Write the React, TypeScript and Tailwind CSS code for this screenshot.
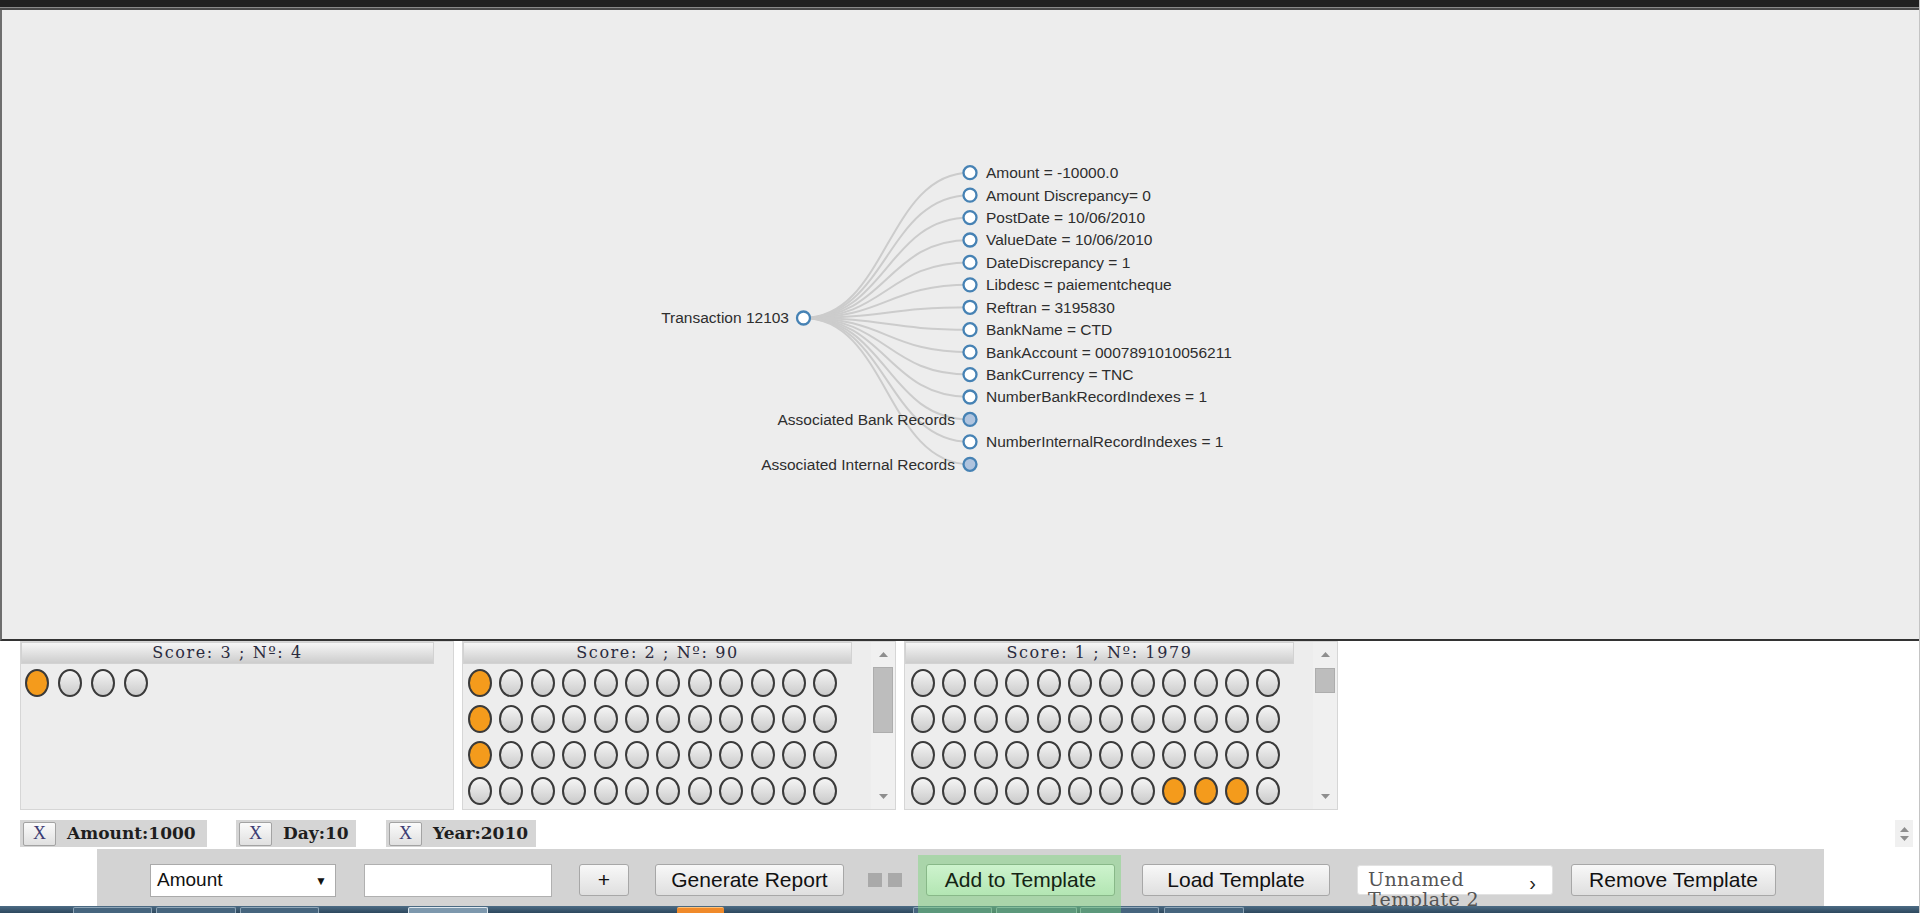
import React from "react";

type Leaf = { t: string; c?: boolean };

const leaves: Leaf[] = [
  { t: "Amount = -10000.0" },
  { t: "Amount Discrepancy= 0" },
  { t: "PostDate = 10/06/2010" },
  { t: "ValueDate = 10/06/2010" },
  { t: "DateDiscrepancy = 1" },
  { t: "Libdesc = paiementcheque" },
  { t: "Reftran = 3195830" },
  { t: "BankName = CTD" },
  { t: "BankAccount = 0007891010056211" },
  { t: "BankCurrency = TNC" },
  { t: "NumberBankRecordIndexes = 1" },
  { t: "Associated Bank Records", c: true },
  { t: "NumberInternalRecordIndexes = 1" },
  { t: "Associated Internal Records", c: true },
];

const ROOT_X = 803.5;
const ROOT_Y = 318;
const LEAF_X = 970;

function Tree() {
  const ys = leaves.map((_, i) => 172.7 + 22.43 * i);
  const mid = (ROOT_X + LEAF_X) / 2;
  return (
    <svg width={1917} height={629} className="block">
      <g transform="translate(-2,-10)" fontFamily="'Liberation Sans', Arial, sans-serif" fontSize={15.5}>
        {ys.map((y, i) => (
          <path
            key={"l" + i}
            d={`M${ROOT_X},${ROOT_Y}C${mid},${ROOT_Y} ${mid},${y} ${LEAF_X},${y}`}
            fill="none"
            stroke="#cccccc"
            strokeWidth={2}
          />
        ))}
        <circle cx={ROOT_X} cy={ROOT_Y} r={6.5} fill="#ffffff" stroke="#4682b4" strokeWidth={2.3} />
        <text x={789} y={ROOT_Y} dy="0.35em" textAnchor="end" fill="#2e2e2e">
          Transaction 12103
        </text>
        {leaves.map((l, i) => (
          <g key={"n" + i}>
            <circle
              cx={LEAF_X}
              cy={ys[i]}
              r={6.5}
              fill={l.c ? "#b0c4de" : "#ffffff"}
              stroke="#4682b4"
              strokeWidth={2.3}
            />
            <text
              x={l.c ? LEAF_X - 15 : LEAF_X + 16}
              y={ys[i]}
              dy="0.35em"
              textAnchor={l.c ? "end" : "start"}
              fill="#2e2e2e"
            >
              {l.t}
            </text>
          </g>
        ))}
      </g>
    </svg>
  );
}

function Dot({ on }: { on: boolean }) {
  return (
    <span
      className={
        on
          ? "block shrink-0 w-[24px] h-[28px] rounded-[50%] border-2 border-[#3a3a3a] bg-[#f49b1c]"
          : "block shrink-0 w-[24px] h-[28px] rounded-[50%] border-2 border-[#3a3a3a] bg-linear-to-b from-[#f5f5f5] to-[#cbcbcb]"
      }
    />
  );
}

function Arrow({ down }: { down?: boolean }) {
  return (
    <svg width="9" height="5">
      <polygon points={down ? "0,0 9,0 4.5,5" : "0,5 4.5,0 9,5"} fill="#8e8e8e" />
    </svg>
  );
}

function Scroll({ top, h }: { top: number; h: number }) {
  return (
    <div className="w-[24px] h-full bg-[#f0f0f0] flex flex-col items-center">
      <div className="h-[25px] flex items-center justify-center">
        <Arrow />
      </div>
      <div
        className="w-[20px] bg-[#bdbdbd] border border-[#adadad]"
        style={{ marginTop: top - 25, height: h }}
      />
      <div className="flex-1" />
      <div className="h-[25px] flex items-center justify-center">
        <Arrow down />
      </div>
    </div>
  );
}

function Header({ title, w }: { title: string; w: string }) {
  return (
    <div
      className={
        w +
        " h-[22px] shrink-0 flex items-center justify-center bg-linear-to-b from-[#f6f6f6] to-[#cdcdcd] border border-[#d2d2d2] text-[16px] tracking-[1.6px] text-[#2b2b3e] font-['DejaVu_Serif',serif]"
      }
    >
      {title}
    </div>
  );
}

function grid(rows: number, cols: number, on: (r: number, c: number) => boolean) {
  return Array.from({ length: rows }, (_, r) => (
    <div key={r} className="flex gap-[7.4px]">
      {Array.from({ length: cols }, (_, c) => (
        <Dot key={c} on={on(r, c)} />
      ))}
    </div>
  ));
}

function ScoreRow() {
  return (
    <div className="flex gap-[8px] pl-[20px] h-[169px]">
      <div className="w-[434px] h-full bg-[#ededed] border border-[#d6d6d6] overflow-hidden">
        <Header title="Score: 3 ; Nº: 4" w="w-[413px]" />
        <div className="flex gap-[9px] pl-[4px] pt-[5px]">
          {[true, false, false, false].map((o, i) => (
            <Dot key={i} on={o} />
          ))}
        </div>
      </div>
      <div className="w-[434px] h-full bg-[#ededed] border border-[#d6d6d6] overflow-hidden flex">
        <div className="flex-1 flex flex-col">
          <Header title="Score: 2 ; Nº: 90" w="w-[389px]" />
          <div className="flex flex-col gap-[8px] pl-[5px] pt-[5px]">
            {grid(4, 12, (r, c) => c === 0 && r < 3)}
          </div>
        </div>
        <Scroll top={25} h={66} />
      </div>
      <div className="w-[434px] h-full bg-[#ededed] border border-[#d6d6d6] overflow-hidden flex">
        <div className="flex-1 flex flex-col">
          <Header title="Score: 1 ; Nº: 1979" w="w-[389px]" />
          <div className="flex flex-col gap-[8px] pl-[6px] pt-[5px]">
            {grid(4, 12, (r, c) => r === 3 && c >= 8 && c <= 10)}
          </div>
        </div>
        <Scroll top={26} h={25} />
      </div>
    </div>
  );
}

function Chip({ label, w }: { label: string; w: string }) {
  return (
    <div className={w + " h-[27px] flex items-center bg-[#d5d5d5]"}>
      <div className="ml-[3px] w-[33px] h-[24px] shrink-0 border border-[#a3a3a3] rounded-[2px] bg-linear-to-b from-[#fbfbfb] to-[#e0e0e0] flex items-center justify-center text-[18px] text-[#3b3b72] font-['Liberation_Serif',serif]">
        X
      </div>
      <span className="ml-[11px] text-[17px] font-bold text-[#1e1e1e] font-['DejaVu_Serif',serif] leading-none whitespace-nowrap">
        {label}
      </span>
    </div>
  );
}

const btn =
  "h-[32px] shrink-0 flex items-center justify-center border border-[#a7a7a7] rounded-[3px] bg-linear-to-b from-[#f8f8f8] to-[#dfdfdf] text-[21px] text-[#111] whitespace-nowrap";

function Toolbar() {
  return (
    <div className="mt-[2px] ml-[97px] w-[1727px] h-[57px] bg-[#d3d3d3] flex items-start pt-[15px] pl-[53px]">
      <div className="w-[186px] h-[33px] shrink-0 bg-white border border-[#aaaaaa] flex items-center pl-[6px] pr-[8px] text-[19px] text-[#111]">
        <span>Amount</span>
        <span className="ml-auto text-[12px]">▼</span>
      </div>
      <div className="ml-[28px] w-[188px] h-[33px] shrink-0 bg-white border border-[#b0b0b0]" />
      <div className={btn + " ml-[27px] w-[50px]"}>+</div>
      <div className={btn + " ml-[26px] w-[189px]"}>Generate Report</div>
      <div className="ml-[24px] mt-[9px] flex gap-[6px] shrink-0">
        <span className="block w-[14px] h-[14px] bg-[#a9a9a9]" />
        <span className="block w-[14px] h-[14px] bg-[#a9a9a9]" />
      </div>
      <div className="ml-[24px] w-[189px] relative shrink-0">
        <div className="absolute top-[-9px] left-[-8px] right-[-6px] h-[62px] bg-[rgba(120,215,120,0.45)] z-20" />
        <div className="relative z-30 h-[32px] w-full flex items-center justify-center border border-[#88b888] rounded-[3px] bg-linear-to-b from-[#cdf3cd] to-[#b3e6b3] text-[21px] text-[#142414] whitespace-nowrap">
          Add to Template
        </div>
      </div>
      <div className={btn + " ml-[27px] w-[188px]"}>Load Template</div>
      <div className="ml-[27px] w-[196px] h-[30px] mt-[1px] shrink-0 bg-white rounded-[3px] border border-[#e2e2e2] flex items-start">
        <span className="block w-[130px] pl-[10px] pt-[3px] text-[19px] leading-[20px] tracking-[0.4px] text-[#555] font-['DejaVu_Serif',serif]">
          Unnamed Template 2
        </span>
        <span className="ml-auto mr-[16px] mt-[2px] text-[20px] text-[#222]">›</span>
      </div>
      <div className={btn + " ml-[18px] w-[205px]"}>Remove Template</div>
    </div>
  );
}

const task = [
  { ml: "ml-[73px]", w: "w-[79px]", a: false },
  { ml: "ml-[4px]", w: "w-[80px]", a: false },
  { ml: "ml-[4px]", w: "w-[79px]", a: false },
  { ml: "ml-[89px]", w: "w-[80px]", a: true },
  { ml: "ml-[189px]", w: "w-[47px]", a: false },
  { ml: "ml-[189px]", w: "w-[79px]", a: false },
  { ml: "ml-[4px]", w: "w-[81px]", a: false },
  { ml: "ml-[3px]", w: "w-[79px]", a: false },
  { ml: "ml-[5px]", w: "w-[80px]", a: false },
];

function Taskbar() {
  return (
    <div className="relative z-10 h-[7px] shrink-0 bg-linear-to-b from-[#4d6c85] to-[#2d485e] flex items-end">
      {task.map((t, i) => (
        <div
          key={i}
          className={
            t.ml +
            " " +
            t.w +
            (t.a
              ? " h-[6px] rounded-t-[2px] border-t border-x border-[#dfe8ef] bg-[#7d98ad]"
              : i === 4
              ? " h-[6px] rounded-t-[2px] bg-[#f08a2a] border-t border-[#ffc27a]"
              : " h-[6px] rounded-t-[2px] border-t border-x border-[#8fa6b8] bg-[#46657e]")
          }
        />
      ))}
    </div>
  );
}

export default function App() {
  return (
    <div className="w-full h-[913px] overflow-hidden bg-white border-r border-r-[#c4c4c4] flex flex-col font-['Liberation_Sans',Arial,sans-serif]">
      <div className="h-[7px] shrink-0 bg-[#212121]" />
      <div className="h-[1px] shrink-0 bg-[#8a8a8a]" />
      <div className="h-[2px] shrink-0 bg-[#4a4a4a]" />
      <div className="h-[631px] shrink-0 bg-[#ededed] border-l-2 border-b-2 border-l-[#6e6e6e] border-b-[#333333]">
        <Tree />
      </div>
      <ScoreRow />
      <div className="mt-[10px] h-[27px] shrink-0 flex items-center pl-[20px]">
        <Chip label="Amount:1000" w="w-[187px]" />
        <div className="ml-[29px]">
          <Chip label="Day:10" w="w-[120px]" />
        </div>
        <div className="ml-[30px]">
          <Chip label="Year:2010" w="w-[150px]" />
        </div>
        <div className="ml-auto mr-[6px] w-[18px] h-[27px] bg-[#f0f0f0] flex flex-col items-center justify-center gap-[4px]">
          <Arrow />
          <Arrow down />
        </div>
      </div>
      <Toolbar />
      <Taskbar />
    </div>
  );
}
